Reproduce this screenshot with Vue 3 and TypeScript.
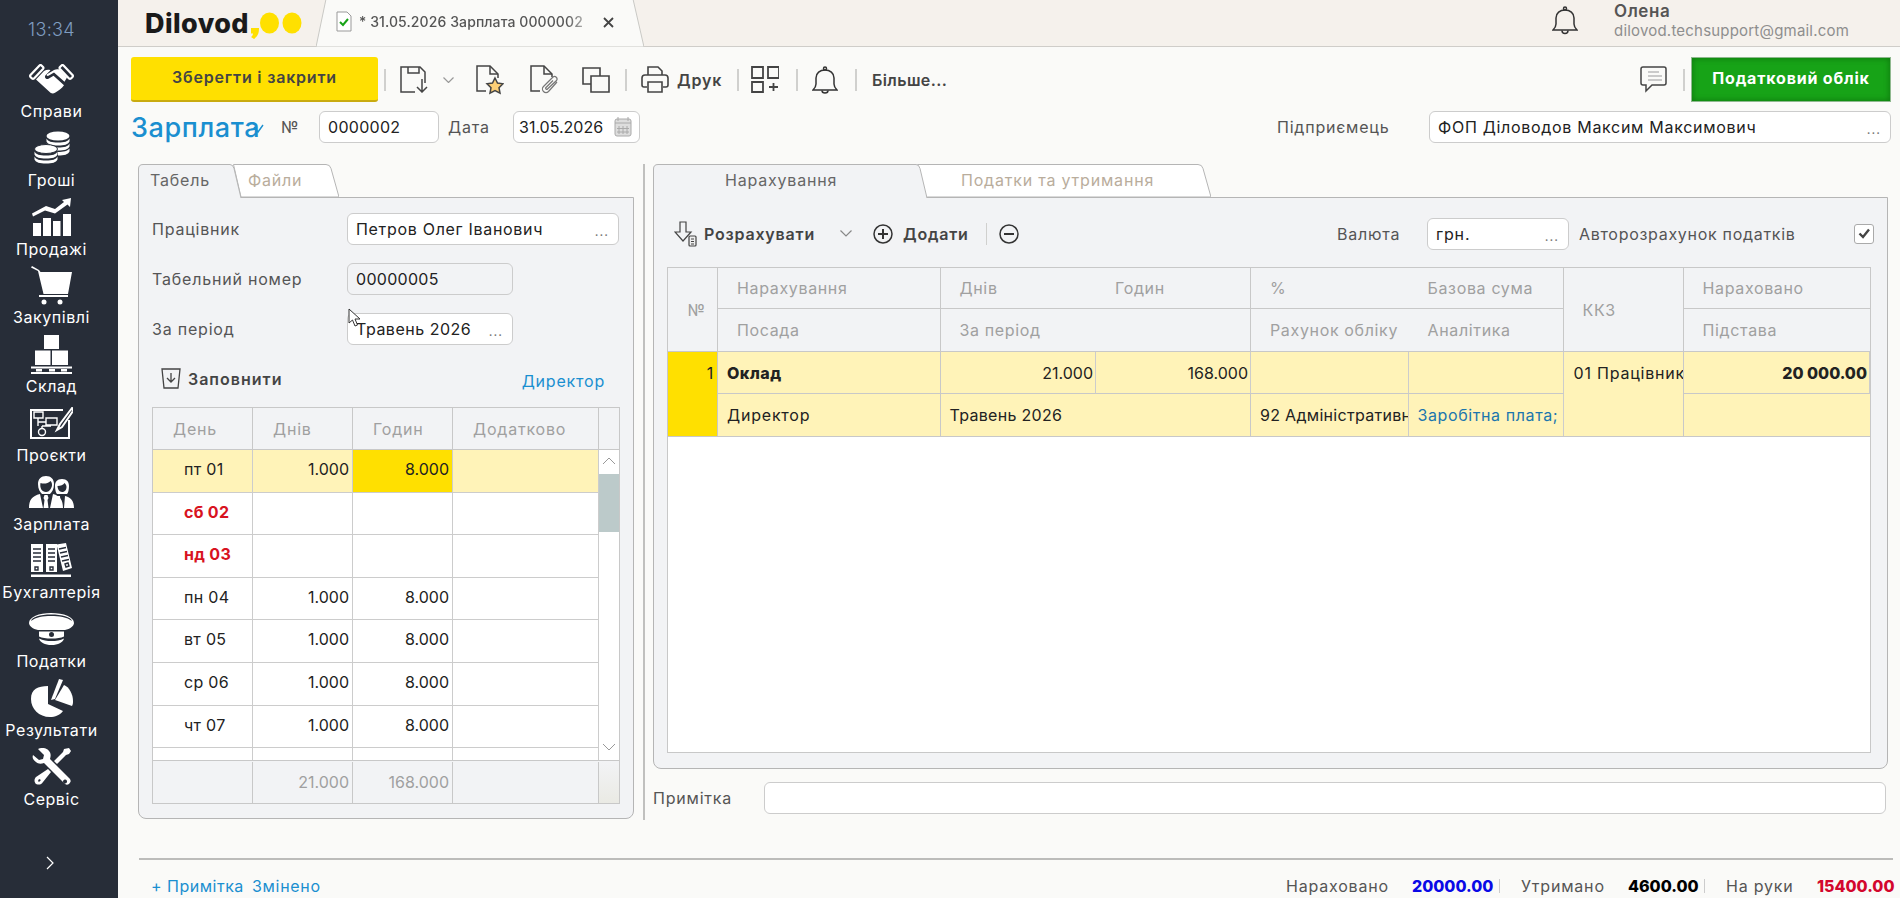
<template>
  <div class="app">
    <aside class="side">
      <div class="clock">13:34</div>
      <nav class="nav">
        <a class="nav-item">
          <span class="nav-ico">
            <svg width="45" height="30" viewBox="0 0 45 30" fill="#fff"><path d="M10.500 1.500 1.500 11a1.500 1.500 0 0 0 0 2l1.500 1.500a1.500 1.500 0 0 0 2 0l9-9.500a1.500 1.500 0 0 0 0-2L12.500 1.500a1.500 1.500 0 0 0-2 0z" fill="none" stroke="#fff" stroke-width="2.200"/><path d="M34.500 1.500l9 9.500a1.500 1.500 0 0 1 0 2L42 14.500a1.500 1.500 0 0 1-2 0L31 5a1.500 1.500 0 0 1 0-2l1.500-1.500a1.500 1.500 0 0 1 2 0z" fill="none" stroke="#fff" stroke-width="2.200"/><path d="M7 15.500 15 7c2-1 4-1.500 6.500-.8l-5 5c-1.500 2 .5 4.500 3 3.500l5-3 10.500 9.500c-2 3-6 6-9 7.500-1.500 1-3 1-4.500 0z"/><path d="M25 6c2-1 3.500-1 5.500-.5l7.500 8-2.500 4.300-10.500-9.300-5.500 3.300c-1.500.6-2.500-.6-1.500-1.500z"/></svg>
          </span>
          <span>Справи</span>
        </a>
        <a class="nav-item">
          <span class="nav-ico">
            <svg width="36" height="33" viewBox="0 0 36 33" fill="#fff"><ellipse cx="24" cy="5" rx="11.500" ry="4.500"/><path d="M12.500 7.500c1.500 3 5 4 11.500 4s10-1 11.500-4v3c-1.500 3-5 4-11.500 4-6 0-10-1-11.500-4zM12.500 12.500c1.500 3 5 4 11.500 4s10-1 11.500-4v3c-1.500 3-5 4-11.500 4h-2l-1-3c-3-1-6-2-8.500-4zM24 21c5 0 10-1 11.500-3.500v3c-1.500 3-5 4-11.500 4z"/><ellipse cx="12" cy="18" rx="11.500" ry="4.500" stroke="#272d38"/><path d="M.5 20.500c1.500 3 5 4 11.500 4s10-1 11.500-4v3c-1.500 3-5 4-11.500 4s-10-1-11.500-4zM.5 25.500c1.500 3 5 4 11.500 4s10-1 11.500-4v3c-1.500 3-5 4-11.500 4s-10-1-11.500-4z"/></svg>
          </span>
          <span>Гроші</span>
        </a>
        <a class="nav-item">
          <span class="nav-ico">
            <svg width="39" height="38" viewBox="0 0 39 38" fill="#fff"><path d="M0 15.500 14 8l9 3 9-7-2-2 9-2-1 9-2.500-2.500-12.500 9-10-3-12 6z"/><rect x="1" y="25" width="8" height="13"/><rect x="11" y="20" width="8" height="18"/><rect x="21" y="23" width="7.500" height="15"/><rect x="31" y="16" width="8" height="22"/></svg>
          </span>
          <span>Продажі</span>
        </a>
        <a class="nav-item">
          <span class="nav-ico">
            <svg width="41" height="39" viewBox="0 0 41 39" fill="#fff"><path d="M0 1.500 1 0l7 4 1.500 2H41l-4 22H12.500L7 5z"/><rect x="8" y="29" width="29" height="2"/><circle cx="13" cy="36" r="2.500"/><circle cx="29" cy="36" r="2.500"/></svg>
          </span>
          <span>Закупівлі</span>
        </a>
        <a class="nav-item">
          <span class="nav-ico">
            <svg width="41" height="39" viewBox="0 0 41 39" fill="#fff"><rect x="13" y="0" width="15" height="14"/><rect x="4" y="15.500" width="15.500" height="14.500"/><rect x="21" y="15.500" width="16" height="14.500"/><rect x="0" y="31.500" width="41" height="2"/><rect x="0" y="37" width="41" height="2"/><rect x="5" y="34" width="6" height="2.500"/><rect x="18" y="34" width="6" height="2.500"/><rect x="30" y="34" width="6" height="2.500"/></svg>
          </span>
          <span>Склад</span>
        </a>
        <a class="nav-item">
          <span class="nav-ico">
            <svg width="43" height="32" viewBox="0 0 43 32" fill="none" stroke="#fff"><path stroke-width="2" d="M33 3H1v28h38V13"/><path stroke-width="1.400" d="M4 5h9v6H4zM16 11h11v7H16zM8 11v8M8 15h8M12 19h9M12 19v3"/><circle cx="12" cy="25" r="3.500" stroke-width="1.400"/><path stroke-width="2" d="M42 1 30 17l-3 6 5-3L43 4z"/></svg>
          </span>
          <span>Проєкти</span>
        </a>
        <a class="nav-item">
          <span class="nav-ico">
            <svg width="45" height="32" viewBox="0 0 45 32" fill="#fff"><path d="M17 0c-5 0-8 3-8 8s2 8 4 10h8c2-2 4-5 4-10s-3-8-8-8zm-5.500 7c3 1 7 1 10-2 1 1 1.500 2 1.500 4s-2 7-6 7-6.500-4-5.500-9z" /><path d="M0 32c0-8 3-12 11-14l3 14zM34 32c0-8-3-12-10-14l-3 14zM15.500 19h3l1 3-1 2 1 8h-5l1-8-1-2z"/><path d="M33 3c-5 0-7 3-7 7s1 7 2 8h10c1-1 2-4 2-8s-2-7-7-7zm-4.500 7c3 0 6-1 7-3 1 1 2 2 2 4 0 3-2 5-4.500 5s-4.500-3-4.500-6z"/><path d="M35 32l1-12c5 1 9 4 9 12zM31 20l1 12h-3l-2-12z"/></svg>
          </span>
          <span>Зарплата</span>
        </a>
        <a class="nav-item">
          <span class="nav-ico">
            <svg width="41" height="34" viewBox="0 0 41 34" fill="#fff"><path d="M0 1h12v28H0zM15 1h11v28H15zM25.500 1.500 35 0l6 25-9 3z"/><rect x="0" y="31.500" width="40" height="2.500"/><g stroke="#272d38" stroke-width="1.400" fill="none"><path d="M2 6h8M2 10h8M2 14h8M2 18h8M17 6h7M17 10h7M17 14h7M17 18h7M28 6l7-1.500M29 10l7-1.500M30 14l7-1.500M31 18l7-1.500M4 24h3v3H4zM19 24h3v3h-3zM34 21l3-1 1 3-3 1z"/></g></svg>
          </span>
          <span>Бухгалтерія</span>
        </a>
        <a class="nav-item">
          <span class="nav-ico">
            <svg width="45" height="32" viewBox="0 0 45 32" fill="#fff"><path d="M22 0C10 0 0 4 0 10c0 3 4 6 9 7h27c5-1 9-4 9-7 0-6-10-10-23-10zm0 1.500C33 1.500 42 4 43 8 38 4 30 3 22 3S7 4 2 8c1-4 9-6.500 20-6.500z"/><path d="M10 18.500h25v5c-3 1.500-7 2-12.500 2S13 25 10 23.500zM10 25.500c4 2 8 2.500 12.500 2.500s9-.5 12.500-2.500c-1 4-6 6.500-12.500 6.500S11 29.500 10 25.500z"/><circle cx="22.500" cy="21.500" r="2.500" fill="#272d38"/></svg>
          </span>
          <span>Податки</span>
        </a>
        <a class="nav-item">
          <span class="nav-ico">
            <svg width="42" height="38" viewBox="0 0 42 38" fill="#fff"><path d="M17 7v18l15 7c-3 4-8 6-13 6C8 38 0 30 0 20S7 7 17 7z"/><path d="M20 21 28 0l4 1-8 19z"/><path d="M33 6c5 2 9 9 9 16 0 2 0 3-1 5l-17-6z"/></svg>
          </span>
          <span>Результати</span>
        </a>
        <a class="nav-item">
          <span class="nav-ico">
            <svg width="39" height="37" viewBox="0 0 39 37" fill="#fff"><path d="M1 7 7 12l4-1 1-4L6 1c4-2 9-1 11 2 2 2 2 5 1 8l20 20c1 2 1 3-1 5-2 1-3 1-5-1L12 15c-3 1-6 1-8-1C1 12 0 10 1 7zM33 31.500a2 2 0 1 0 .1 0z"/><path d="M37 0l2 3-2 3-3 1-9 9-3-3 9-9 1-3zM16 21l3 3-8 10c-2 3-4 3-7 2-2-2-2-5 0-7zM7 31l-1 2 1 1 2-2z"/></svg>
          </span>
          <span>Сервіс</span>
        </a>
      </nav>
      <svg class="expand" width="8" height="14" viewBox="0 0 8 14" fill="none" stroke="#fff" stroke-width="1.200"><path d="M1 1l6 6-6 6"/></svg>
    </aside>

    <main class="main">
      <header class="topbar">
        <div class="logo">
          <span>Dilovod</span>
          <svg width="54" height="27" viewBox="0 0 54 27" fill="#ffe000"><path d="M2 16h8c0 5-1 8-5 11l-3-2c1.500-1 2-2.500 2-3.500H2z"/><ellipse cx="20.500" cy="11" rx="9.500" ry="10.500"/><ellipse cx="43" cy="11" rx="9.500" ry="10.500"/></svg>
        </div>
        <div class="doc-tab">
          <svg class="doc-tab-shape" width="328" height="47" viewBox="0 0 328 47"><path d="M0 47 10-1H317L328 47z" fill="#fafaf8" stroke="#c9c9c5"/></svg>
          <svg class="doc-tab-ico" width="16" height="21" viewBox="0 0 16 21" fill="none"><path d="M1 1h10l4 4v15H1z" fill="#fff" stroke="#999"/><path d="M4 11l3 3 5-6" stroke="#17a317" stroke-width="2"/></svg>
          <span class="doc-tab-text">* 31.05.2026 Зарплата 0000002</span>
          <svg class="doc-tab-x" width="11" height="11" viewBox="0 0 11 11" stroke="#444" stroke-width="1.800"><path d="M1 1l9 9M10 1l-9 9"/></svg>
        </div>
        <svg class="top-bell" width="26" height="29" viewBox="0 0 26 29" fill="none" stroke="#333" stroke-width="1.500"><path d="M1 24c2-2 3-4 3-6v-6c0-5 4-8 9-8s9 3 9 8v6c0 2 1 4 3 6z"/><circle cx="13" cy="2.500" r="1.500"/><path d="M10 24.500c0 2 1.500 3 3 3s3-1 3-3"/></svg>
        <div class="user">
          <b>Олена</b>
          <span>dilovod.techsupport@gmail.com</span>
        </div>
      </header>

      <div class="toolbar">
        <button class="btn-save">Зберегти і закрити</button>
        <i class="sep sep-a"></i>
        <svg class="t-save" width="28" height="27" viewBox="0 0 28 27" fill="none" stroke="#444" stroke-width="1.500"><path d="M15 26H1V1h19l5 5v11"/><path d="M8 1v6h11V1"/><path d="M22 13v13M17 21l5 5 5-5"/></svg>
        <svg class="t-chev" width="11" height="6" viewBox="0 0 11 6" fill="none" stroke="#999" stroke-width="1.200"><path d="M.5.5l5 5 5-5"/></svg>
        <svg class="t-star" width="28" height="30" viewBox="0 0 28 30" fill="none" stroke="#444" stroke-width="1.500"><path d="M10 26H1V1h13l8 8v4"/><path d="M14 1v8h8"/><path d="M19 13l2.500 5 5.500.8-4 3.900 1 5.500-5-2.600-5 2.600 1-5.500-4-3.900 5.500-.8z" fill="#fdcf76"/></svg>
        <svg class="t-clip" width="28" height="30" viewBox="0 0 28 30" fill="none" stroke="#444" stroke-width="1.500"><path d="M10 26H1V1h13l8 8v3"/><path d="M14 1v8h8"/><path d="M27 17l-8.500 9.500a3.500 3.500 0 0 1-5-5L23 12a2.500 2.500 0 0 1 3.500 3.500L17.500 24a1 1 0 0 1-1.500-1.500l7-7" stroke="#777" stroke-width="1.200"/></svg>
        <svg class="t-copy" width="28" height="26" viewBox="0 0 28 26" fill="none" stroke="#444" stroke-width="1.600"><path d="M9 17H1V1h17v8"/><path d="M9 9h18v16H9z"/></svg>
        <i class="sep sep-b"></i>
        <svg class="t-print" width="28" height="27" viewBox="0 0 28 27" fill="none" stroke="#444" stroke-width="1.600"><path d="M7 9V1h10l4 4v4"/><path d="M6 21H3c-1 0-2-1-2-2v-7c0-2 1-3 3-3h20c2 0 3 1 3 3v7c0 1-1 2-2 2h-3"/><path d="M7 16h14v10H7z"/></svg>
        <b class="t-print-text">Друк</b>
        <i class="sep sep-c"></i>
        <svg class="t-grid" width="28" height="27" viewBox="0 0 28 27" fill="none" stroke="#444" stroke-width="1.800"><path d="M1 1h11v11H1zM17 1h11v11H17zM1 16h11v10H1z"/><path d="M18 21h9M22.500 17v8"/></svg>
        <i class="sep sep-d"></i>
        <svg class="t-bell" width="26" height="28" viewBox="0 0 26 28" fill="none" stroke="#333" stroke-width="1.500"><path d="M1 24c2-2 3-4 3-6v-6c0-5 4-8 9-8s9 3 9 8v6c0 2 1 4 3 6z"/><circle cx="13" cy="2.500" r="1.500"/><path d="M10 24.500c0 1.500 1.500 2.500 3 2.500s3-1 3-2.500"/></svg>
        <i class="sep sep-e"></i>
        <b class="t-more">Більше...</b>
        <svg class="t-chat" width="27" height="27" viewBox="0 0 27 27" fill="none" stroke="#444" stroke-width="1.500"><path d="M3 1h21c1 0 2 1 2 2v14c0 1-1 2-2 2H12l-6 6v-6H3c-1 0-2-1-2-2V3c0-1 1-2 2-2z"/><path d="M8 6h11M8 10h14M8 14h14" stroke="#bbb" stroke-width="1.400"/></svg>
        <i class="sep sep-f"></i>
        <button class="btn-tax">Податковий облік</button>
      </div>

      <div class="doc-row">
        <h1 class="title">Зарплата<svg width="11" height="10" viewBox="0 0 11 10" fill="none" stroke="#1a8fd0" stroke-width="1.400"><path d="M1 3l4 5 5-7"/></svg></h1>
        <label class="lbl-no">№</label>
        <div class="field w-no">0000002</div>
        <label class="lbl-date">Дата</label>
        <div class="field w-date">31.05.2026
          <svg class="cal" width="18" height="20" viewBox="0 0 18 20" fill="#ddd" stroke="#aaa"><rect x="1" y="2" width="16" height="17" rx="2"/><path d="M4 0v4M14 0v4M1 6h16M5 9v8M9 9v8M13 9v8M3 11.500h12M3 15h12" fill="none"/></svg>
        </div>
        <label class="lbl-firm">Підприємець</label>
        <div class="field w-firm">ФОП Діловодов Максим Максимович<span class="dots">...</span></div>
      </div>

      <div class="content">
        <section class="left">
          <div class="tabs">
            <div class="tab tab-l1">
              <svg width="103" height="34" viewBox="0 0 103 34"><path d="M.5 34V5Q.5.5 5 .5H92q3 0 4 4L103 34" fill="#f2f3f5" stroke="#b5b5b5"/></svg>
              <span>Табель</span>
            </div>
            <div class="tab tab-l2">
              <svg width="106" height="33" viewBox="0 0 106 33"><path d="M8 33 .5.500H93q4 0 5 4L106 33z" fill="#fff" stroke="#b5b5b5"/></svg>
              <span>Файли</span>
            </div>
          </div>
          <div class="panel panel-left">
            <div class="form-row"><label>Працівник</label><div class="field w-emp">Петров Олег Іванович<span class="dots">...</span></div></div>
            <div class="form-row"><label>Табельний номер</label><div class="field w-short readonly">00000005</div></div>
            <div class="form-row"><label>За період</label><div class="field w-short w-period">Травень 2026<span class="dots">...</span></div></div>
            <div class="fill-row">
              <svg width="20" height="21" viewBox="0 0 20 21" fill="none" stroke="#444" stroke-width="1.300"><path d="M1 1h18l-2 19H3z"/><path d="M10 5v9M6 10l4 4 4-4"/></svg>
              <b>Заповнити</b>
              <a>Директор</a>
            </div>
            <div class="sheet">
              <div class="sheet-head">
                <div>День</div><div>Днів</div><div>Годин</div><div>Додатково</div><div></div>
              </div>
              <div class="sheet-mid">
                <div class="sheet-rows">
                  <div v-for="d in days" :key="d.day" class="sheet-row" :class="{ cur: d.cur, off: d.off }">
                    <div class="day">{{ d.day }}</div>
                    <div class="num">{{ d.days }}</div>
                    <div class="num" :class="{ sel: d.cur }">{{ d.hours }}</div>
                    <div></div>
                  </div>
                </div>
                <div class="vscroll">
                  <svg width="14" height="8" viewBox="0 0 14 8" fill="none" stroke="#999"><path d="M1 7l6-6 6 6"/></svg>
                  <i></i>
                  <svg class="down" width="14" height="8" viewBox="0 0 14 8" fill="none" stroke="#999"><path d="M1 1l6 6 6-6"/></svg>
                </div>
              </div>
              <div class="sheet-foot">
                <div></div><div>21.000</div><div>168.000</div><div></div><div class="corner"></div>
              </div>
            </div>
          </div>
        </section>

        <i class="divider"></i>

        <section class="right">
          <div class="tabs">
            <div class="tab tab-r1">
              <svg width="274" height="34" viewBox="0 0 274 34"><path d="M.5 34V5Q.5.5 5 .5H263q3 0 4 4L274 34" fill="#f2f3f5" stroke="#b5b5b5"/></svg>
              <span>Нарахування</span>
            </div>
            <div class="tab tab-r2">
              <svg width="294" height="33" viewBox="0 0 294 33"><path d="M8 33 .5.500H281q4 0 5 4L294 33z" fill="#fff" stroke="#b5b5b5"/></svg>
              <span>Податки та утримання</span>
            </div>
          </div>
          <div class="panel panel-right">
            <div class="calc-bar">
              <svg class="c-calc" width="24" height="26" viewBox="0 0 24 26" fill="none" stroke="#444" stroke-width="1.200"><path d="M6 1h6v10h5l-8 9-8-9h5z"/><rect x="15" y="15" width="7" height="10" rx="1" fill="#eee"/><path d="M17 18h3M17 20.500h3M17 23h3"/></svg>
              <b class="c-label">Розрахувати</b>
              <svg class="c-chev" width="12" height="7" viewBox="0 0 12 7" fill="none" stroke="#888" stroke-width="1.200"><path d="M.5.5 6 6 11.500.5"/></svg>
              <svg class="c-plus" width="20" height="20" viewBox="0 0 20 20" fill="none" stroke="#333" stroke-width="1.500"><circle cx="10" cy="10" r="9"/><path d="M10 5v10M5 10h10" stroke-width="2"/></svg>
              <b class="c-add">Додати</b>
              <i class="sep sep-g"></i>
              <svg class="c-minus" width="20" height="20" viewBox="0 0 20 20" fill="none" stroke="#333" stroke-width="1.500"><circle cx="10" cy="10" r="9"/><path d="M5 10h10" stroke-width="2"/></svg>
              <label class="c-cur">Валюта</label>
              <div class="field w-cur">грн.<span class="dots">...</span></div>
              <label class="c-auto">Авторозрахунок податків</label>
              <span class="check"><svg width="12" height="11" viewBox="0 0 12 11" fill="none" stroke="#444" stroke-width="2.400"><path d="M1.500 5.500 5 9l6-7.500"/></svg></span>
            </div>
            <div class="calc-table">
              <div class="g-head">
                <div class="h no">№</div>
                <div class="h c2">Нарахування</div>
                <div class="h c3">Днів</div>
                <div class="h c4 br">Годин</div>
                <div class="h c5">%</div>
                <div class="h c6 br">Базова сума</div>
                <div class="h kkz">ККЗ</div>
                <div class="h c8 last">Нараховано</div>
                <div class="h c2 low">Посада</div>
                <div class="h c34 low br">За період</div>
                <div class="h c5 low">Рахунок обліку</div>
                <div class="h c6 low br">Аналітика</div>
                <div class="h c8 low last">Підстава</div>
              </div>
              <div class="g-row">
                <div class="d no">1</div>
                <div class="d c2"><b>Оклад</b></div>
                <div class="d c3 num">21.000</div>
                <div class="d c4 num">168.000</div>
                <div class="d c5"></div>
                <div class="d c6"></div>
                <div class="d kkz">01 Працівник</div>
                <div class="d c8 num last"><b>20 000.00</b></div>
                <div class="d c2">Директор</div>
                <div class="d c34">Травень 2026</div>
                <div class="d c5">92 Адміністративні</div>
                <div class="d c6 link">Заробітна плата;</div>
                <div class="d c8 last"></div>
              </div>
            </div>
          </div>
          <div class="note-row">
            <label>Примітка</label>
            <div class="field w-note"></div>
          </div>
        </section>
      </div>

      <div class="foot-line"></div>
      <footer class="foot">
        <a class="f-note">+ Примітка</a>
        <a class="f-changed">Змінено</a>
        <span class="f-l1">Нараховано</span><b class="f-blue">20000.00</b><i class="f-sep"></i>
        <span class="f-l2">Утримано</span><b class="f-black">4600.00</b><i class="f-sep"></i>
        <span class="f-l3">На руки</span><b class="f-red">15400.00</b>
      </footer>
    </main>

    <svg class="pointer" width="13" height="20" viewBox="0 0 13 20" fill="#fff" stroke="#333"><path d="M1 1v14l3.500-3 2.500 6 2.500-1-2.500-6H12z"/></svg>
  </div>
</template>

<script setup lang="ts">
interface DayRow {
  day: string;
  days: string;
  hours: string;
  cur?: boolean;
  off?: boolean;
}

const days: DayRow[] = [
  { day: "пт 01", days: "1.000", hours: "8.000", cur: true },
  { day: "сб 02", days: "", hours: "", off: true },
  { day: "нд 03", days: "", hours: "", off: true },
  { day: "пн 04", days: "1.000", hours: "8.000" },
  { day: "вт 05", days: "1.000", hours: "8.000" },
  { day: "ср 06", days: "1.000", hours: "8.000" },
  { day: "чт 07", days: "1.000", hours: "8.000" },
  { day: "", days: "", hours: "" },
];
</script>

<style>
html, body { margin: 0; background: #fafaf8; }
</style>

<style scoped>
.app {
  position: relative;
  display: flex;
  width: 1900px;
  height: 898px;
  overflow: hidden;
  font-family: Inter, "Noto Sans", sans-serif;
  font-size: 16px;
  letter-spacing: 0.8px;
  color: #222;
  background: #fafaf8;
}
b { font-weight: 700; }
i { display: block; }
label { color: #555; }

.side {
  flex: 0 0 118px;
  width: 118px;
  display: flex;
  flex-direction: column;
  background: #272d38;
  color: #fff;
}
.clock {
  width: 103px;
  height: 55px;
  line-height: 60px;
  text-align: center;
  font-size: 18px;
  font-weight: 300;
  color: #7f9cc0;
  letter-spacing: 0.3px;
}
.nav { display: flex; flex-direction: column; gap: 4.75px; width: 103px; }
.nav-item {
  display: flex;
  flex-direction: column;
  align-items: center;
  height: 64px;
  line-height: 16px;
  white-space: nowrap;
  letter-spacing: 0.55px;
}
.nav-ico { display: flex; align-items: center; justify-content: center; height: 48px; }
.expand { margin: 49px 0 0 46px; }

.main { flex: 1; min-width: 0; display: flex; flex-direction: column; }

.topbar {
  display: flex;
  align-items: stretch;
  height: 46px;
  padding-left: 27px;
  background: #f5f1ec;
  border-bottom: 1px solid #cfcdc9;
  flex: none;
}
.logo {
  display: flex;
  align-items: center;
  width: 171px;
  font-size: 27px;
  font-weight: 800;
  letter-spacing: 0.4px;
  color: #1a1a1a;
}
.logo svg { margin: 5px 0 0 0; }
.doc-tab {
  position: relative;
  display: flex;
  align-items: center;
  width: 328px;
  height: 47px;
}
.doc-tab-shape { position: absolute; left: 0; top: 0; }
.doc-tab-ico { position: relative; margin: -5px 0 0 20px; }
.doc-tab-text {
  position: relative;
  flex: none;
  width: 230px;
  margin: -5px 0 0 7px;
  white-space: nowrap;
  color: #555;
  font-weight: 500;
  font-size: 14px;
  letter-spacing: 0.1px;
  -webkit-mask-image: linear-gradient(90deg, #000 90%, rgba(0, 0, 0, 0.3));
  mask-image: linear-gradient(90deg, #000 90%, rgba(0, 0, 0, 0.3));
}
.doc-tab-x { position: relative; flex: none; margin: -3px 0 0 14px; }
.top-bell { flex: none; margin: 6px 0 0 auto; }
.user {
  display: flex;
  flex: none;
  flex-direction: column;
  width: 286px;
  margin-left: 36px;
  padding-top: 2px;
  line-height: 19px;
}
.user b { font-size: 17px; font-weight: 600; color: #555; letter-spacing: 0.6px; }
.user span { font-size: 15px; color: #8e8e8e; letter-spacing: 0.2px; }

.toolbar {
  display: flex;
  align-items: center;
  flex: none;
  height: 45px;
  margin-top: 10px;
  padding: 0 9px 0 13px;
}
.btn-save, .btn-tax {
  height: 45px;
  padding: 0 0 3px;
  font: inherit;
  letter-spacing: inherit;
  cursor: pointer;
}
.btn-save {
  width: 247px;
  color: #444;
  font-weight: 600;
  background: #ffe000;
  border: 0;
  border-bottom: 2px solid #c9ab10;
  border-radius: 3px;
}
.btn-tax {
  width: 200px;
  margin-left: 6px;
  color: #fff;
  font-weight: 700;
  background: #17a317;
  border: 1px solid #8fb98f;
  box-shadow: inset 0 0 6px rgba(0, 60, 0, 0.45);
}
.sep { width: 2px; height: 22px; background: #d0d0ce; }
.sep-a { margin-left: 6px; }
.t-save { margin-left: 14px; }
.t-chev { margin-left: 15px; }
.t-star { margin-left: 22px; }
.t-clip { margin-left: 26px; }
.t-copy { margin-left: 24px; }
.sep-b { margin-left: 15px; }
.t-print { margin-left: 14px; }
.t-print-text { width: 44px; margin-left: 8px; color: #444; font-weight: 600; }
.sep-c { margin-left: 16px; }
.t-grid { margin-left: 12px; }
.sep-d { margin-left: 17px; }
.t-bell { margin-left: 14px; }
.sep-e { margin-left: 17px; }
.t-more { margin-left: 15px; color: #444; font-weight: 600; letter-spacing: 0.4px; }
.t-chat { margin-left: auto; }
.sep-f { margin-left: 16px; }

.doc-row {
  display: flex;
  align-items: center;
  flex: none;
  height: 32px;
  margin-top: 9px;
  padding-left: 13px;
}
.title {
  display: flex;
  width: 150px;
  margin: 0;
  font-size: 27px;
  font-weight: 500;
  letter-spacing: 0.6px;
  color: #1a8fd0;
  white-space: nowrap;
}
.title svg { margin: 13px 0 0 -7px; }
.lbl-no { width: 38px; }
.lbl-date { width: 65px; margin-left: 9px; }
.lbl-firm { width: 152px; margin-left: 637px; }
.field {
  position: relative;
  display: flex;
  align-items: center;
  box-sizing: border-box;
  height: 32px;
  padding-left: 8px;
  color: #222;
  white-space: nowrap;
  background: #fff;
  border: 1px solid #ccc;
  border-radius: 6px;
}
.w-no { width: 120px; letter-spacing: 0.3px; }
.w-date { width: 127px; padding-left: 5px; letter-spacing: 0; }
.w-firm { width: 462px; letter-spacing: 0.7px; }
.w-emp { width: 272px; letter-spacing: 0.7px; }
.w-short { width: 166px; }
.w-period { letter-spacing: 0.5px; }
.w-cur { width: 142px; }
.readonly { background: #f2f3f5; letter-spacing: 0.3px; }
.cal { position: absolute; right: 7px; top: 5px; }
.dots { position: absolute; right: 9px; bottom: 7px; color: #777; font-size: 13px; line-height: 12px; letter-spacing: 1px; }

.content { display: flex; align-items: flex-start; flex: none; margin-top: 21px; padding-left: 20px; }
.left { width: 496px; flex: none; }
.divider { flex: none; width: 2px; height: 656px; margin: 0 8px 0 9px; background: #c0c0be; }
.right { width: 1235px; flex: none; }

.tabs { position: relative; z-index: 1; display: flex; height: 33px; }
.tab { position: relative; height: 33px; line-height: 33px; white-space: nowrap; }
.tab svg { position: absolute; left: 0; top: 0; }
.tab span { position: relative; }
.tab-l1 { z-index: 1; width: 95px; color: #666; }
.tab-l1 span { margin-left: 12px; }
.tab-l2 { width: 106px; color: #b9ad9c; }
.tab-l2 span { margin-left: 15px; }
.tab-r1 { z-index: 1; width: 264px; color: #666; }
.tab-r1 span { margin-left: 72px; }
.tab-r2 { width: 294px; color: #b9ad9c; }
.tab-r2 span { margin-left: 44px; }

.panel {
  box-sizing: border-box;
  background: #f2f3f5;
  border: 1px solid #b5b5b5;
  border-radius: 0 0 8px 8px;
}
.panel-left { height: 622px; padding: 15px 0 0 13px; }
.form-row { display: flex; align-items: center; height: 32px; margin-bottom: 18px; }
.form-row label { width: 195px; }
.fill-row {
  display: flex;
  align-items: center;
  height: 22px;
  margin: 22px 0 18px;
  padding-left: 9px;
}
.fill-row b { margin: 1px 0 0 7px; color: #444; font-weight: 600; letter-spacing: 1px; }
.fill-row a { margin: 6px 0 0 auto; padding-right: 28px; color: #1a8fd0; }

.sheet { width: 466px; border-left: 1px solid #c8c8c8; border-right: 1px solid #c8c8c8; }
.sheet-head, .sheet-foot {
  display: grid;
  grid-template-columns: 100px 100px 100px 146px 1fr;
  color: #a0a0a0;
  background: #f2f3f5;
}
.sheet-head { height: 41px; border-top: 1px solid #c8c8c8; border-bottom: 1px solid #c8c8c8; }
.sheet-head > div { display: flex; align-items: center; padding-left: 20px; border-right: 1px solid #c8c8c8; box-sizing: border-box; }
.sheet-head > div:last-child { border-right: 0; }
.sheet-mid { display: flex; box-sizing: border-box; height: 311px; overflow: hidden; background: #fff; border-bottom: 1px solid #c8c8c8; }
.sheet-rows { width: 446px; flex: none; overflow: hidden; }
.sheet-row {
  display: grid;
  grid-template-columns: 100px 100px 100px 146px;
  box-sizing: border-box;
  height: 42.6px;
  line-height: 38px;
  border-bottom: 1px solid #ccc;
}
.sheet-row > div { box-sizing: border-box; border-right: 1px solid #ccc; }
.sheet-row .day { padding-left: 31px; letter-spacing: 0.3px; }
.sheet-row .num { padding-right: 3px; text-align: right; letter-spacing: 0; }
.sheet-row.cur { background: #fff3b8; }
.sheet-row .sel { background: #ffe000; }
.sheet-row.off .day { color: #d8131f; font-weight: 700; }
.vscroll { position: relative; flex: 1; display: flex; flex-direction: column; align-items: center; padding-top: 7px; }
.vscroll i { position: absolute; left: 0; top: 24px; width: 100%; height: 58px; background: #bccaca; }
.vscroll .down { position: absolute; left: 3px; top: 293px; }
.sheet-foot { height: 41px; margin-top: 1px; border-bottom: 1px solid #c8c8c8; letter-spacing: 0; }
.sheet-foot > div { box-sizing: border-box; padding-right: 3px; line-height: 40px; text-align: right; border-right: 1px solid #c8c8c8; }
.sheet-foot > div:last-child { border-right: 0; }
.corner { background: linear-gradient(#f2f3f5, #eaeae4); }

.panel-right { height: 572px; padding: 20px 0 0 13px; border-radius: 0 0 8px 8px; }
.calc-bar { display: flex; align-items: center; height: 31px; margin-bottom: 18px; }
.calc-bar .sep-g { margin-left: 19px; width: 1px; }
.c-calc { margin-left: 7px; }
.c-label { width: 109px; margin-left: 6px; color: #444; font-weight: 600; white-space: nowrap; }
.c-chev { margin-left: 27px; }
.c-plus { margin-left: 21px; }
.c-add { width: 64px; margin-left: 10px; color: #444; font-weight: 600; }
.c-minus { margin-left: 12px; }
.c-cur { width: 90px; margin-left: 318px; }
.c-auto { width: 275px; margin-left: 10px; white-space: nowrap; letter-spacing: 0.7px; }
.check {
  display: flex;
  align-items: center;
  justify-content: center;
  box-sizing: border-box;
  width: 20px;
  height: 20px;
  background: #fff;
  border: 1px solid #aaa;
  border-radius: 3px;
}

.calc-table {
  box-sizing: border-box;
  width: 1204px;
  height: 486px;
  background: #fff;
  border: 1px solid #c8c8c8;
}
.g-head, .g-row {
  display: grid;
  grid-template-columns: 50px 222.5px 155.5px 155px 157.5px 155px 120px 1fr;
}
.g-head { grid-template-rows: 41px 42px; background: #f2f3f5; border-bottom: 1px solid #c8c8c8; }
.g-row { grid-template-rows: 42px 42px; background: #fff3b8; border-bottom: 1px solid #c8c8c8; }
.h, .d {
  display: flex;
  align-items: center;
  box-sizing: border-box;
  min-width: 0;
  overflow: hidden;
  white-space: nowrap;
}
.h { padding-left: 19px; color: #a0a0a0; letter-spacing: 0.65px; }
.d { padding-left: 9px; color: #222; letter-spacing: 0.8px; }
.d b { font-weight: 800; letter-spacing: 0.5px; }
.d.num { justify-content: flex-end; padding-right: 2px; border-right: 1px solid #ccc; letter-spacing: 0; }
.d.num b { letter-spacing: 0; }
.no { grid-column: 1; grid-row: 1 / 3; border-right: 1px solid #c8c8c8; }
.h.no { justify-content: center; padding-left: 8px; }
.d.no { justify-content: flex-end; padding: 11px 3px 0 0; align-items: flex-start; background: #ffe000; }
.c2 { grid-column: 2; border-right: 1px solid #c8c8c8; border-bottom: 1px solid #c8c8c8; }
.c3 { grid-column: 3; border-bottom: 1px solid #c8c8c8; }
.c4 { grid-column: 4; border-bottom: 1px solid #c8c8c8; }
.c34 { grid-column: 3 / 5; border-right: 1px solid #c8c8c8; border-bottom: 1px solid #c8c8c8; }
.c5 { grid-column: 5; border-bottom: 1px solid #c8c8c8; }
.c6 { grid-column: 6; border-bottom: 1px solid #c8c8c8; }
.c8 { grid-column: 8; border-bottom: 1px solid #c8c8c8; }
.br { border-right: 1px solid #c8c8c8; }
.low { border-bottom: 0; }
.kkz { grid-column: 7; grid-row: 1 / 3; border-right: 1px solid #c8c8c8; }
.h.kkz { padding-left: 19px; }
.d.kkz { align-items: flex-start; padding-top: 11px; padding-left: 10px; }
.d.c5, .d.c6 { border-right: 1px solid #ccc; }
.d.c5 { letter-spacing: 0.3px; }
.d:nth-last-child(-n + 5) { border-bottom: 0; }
.d.c34 { letter-spacing: 0.3px; }
.d.link { color: #1b76ad; letter-spacing: 0.6px; }
.last { border-right: 0; }

.note-row { display: flex; align-items: center; height: 32px; margin-top: 13px; }
.note-row label { width: 111px; }
.w-note { flex: none; width: 1122px; }

.foot-line { flex: none; width: 1754px; height: 2px; margin: 38px 0 0 21px; background: #bcbcba; }
.foot { display: flex; align-items: flex-start; flex: 1; padding: 17px 0 0 33px; line-height: 18px; }
.foot a { color: #1a8fd0; }
.foot span { color: #555; }
.foot b { font-weight: 800; letter-spacing: 0; }
.f-note { width: 101px; letter-spacing: 0.5px; white-space: nowrap; }
.f-changed { width: 70px; letter-spacing: 0.7px; }
.f-l1 { margin-left: 964px; width: 126px; }
.f-blue { width: 80px; color: #0a0ae6; }
.f-sep { width: 1px; height: 14px; margin: 2px 21px 0 7px; background: #ccc; }
.f-l2 { width: 107px; }
.f-black { width: 69px; color: #000; }
.f-l3 { width: 91px; }
.f-red { color: #d3072d; }

.pointer { position: absolute; left: 348px; top: 308px; }
</style>
